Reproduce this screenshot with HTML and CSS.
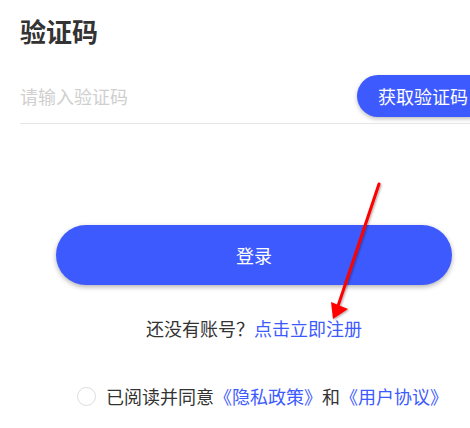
FILE: index.html
```html
<!DOCTYPE html>
<html lang="zh-CN">
<head>
    <meta charset="UTF-8">
    <meta name="viewport" content="width=device-width, initial-scale=1.0">
    <title>验证码登录</title>
    <link rel="stylesheet" href="styles.css">
</head>
<body>

    <div class="page">
        <!-- 标题 -->
        <h1 class="title">验证码</h1>

        <!-- 验证码输入 -->
        <div class="code-row">
            <input type="text" class="code-input" placeholder="请输入验证码">
            <button class="send-btn">获取验证码</button>
        </div>

        <!-- 登录 -->
        <button class="login-btn">登录</button>

        <p class="register">还没有账号？<a href="#">点击立即注册</a></p>

        <label class="agree">
            <span class="radio"></span>
            <span>已阅读并同意<a href="#">《隐私政策》</a>和<a href="#">《用户协议》</a></span>
        </label>
    </div>

    <!-- 标注箭头 -->
    <svg class="arrow" width="470" height="428" viewBox="0 0 470 428">
        <defs>
            <filter id="sh" x="-20%" y="-20%" width="140%" height="140%">
                <feDropShadow dx="1" dy="1" stdDeviation="1" flood-color="#000" flood-opacity="0.35"/>
            </filter>
        </defs>
        <g filter="url(#sh)">
            <line x1="379" y1="184" x2="336" y2="312" stroke="#f00" stroke-width="3" stroke-linecap="round"/>
            <polygon points="333,319 331,302 348,309" fill="#f00"/>
        </g>
    </svg>

</body>
</html>
```

FILE: styles.css
```css
html, body {
    margin: 0;
    padding: 0;
    background: #fff;
    overflow: hidden;
}

body {
    font-family: "Noto Sans CJK SC", "Noto Sans", sans-serif;
    color: #333;
    width: 470px;
    height: 428px;
    position: relative;
}

.page {
    padding: 13px 0 0 20px;
}

/* 标题 */
.title {
    margin: 0;
    font-size: 26px;
    line-height: 36px;
    font-weight: bold;
    color: #333;
}

/* 输入行 */
.code-row {
    display: flex;
    align-items: center;
    margin-top: 26px;
    padding-bottom: 6px;
    border-bottom: 1px solid #e6e6e6;
    width: 450px;
}

.code-input {
    flex: 1;
    min-width: 0;
    border: none;
    outline: none;
    padding: 0;
    font-family: inherit;
    font-size: 18px;
    color: #333;
    background: transparent;
}

.code-input::placeholder {
    color: #cfcfcf;
}

.send-btn {
    flex: none;
    height: 42px;
    width: 132px;
    padding: 0 0 0 21px;
    margin-right: -19px;
    text-align: left;
    border: none;
    border-radius: 21px;
    background-color: #3d5afe;
    color: #fff;
    font-family: inherit;
    font-size: 18px;
    white-space: nowrap;
    box-shadow: 0 2px 4px rgba(0, 0, 0, 0.25);
}

/* 登录按钮 */
.login-btn {
    display: block;
    margin: 101px 0 0 36px;
    width: 396px;
    height: 60px;
    border: none;
    border-radius: 30px;
    background-color: #3d5afe;
    color: #fff;
    font-family: inherit;
    font-size: 18px;
    box-shadow: 0 2px 5px rgba(0, 0, 0, 0.3);
}

.register {
    margin: 30px 0 0;
    padding-left: 126px;
    font-size: 18px;
    line-height: 26px;
}

a {
    color: #3d5afe;
    text-decoration: none;
}

/* 协议 */
.agree {
    display: flex;
    align-items: center;
    gap: 10px;
    margin: 42px 0 0 57px;
    font-size: 18px;
    line-height: 26px;
}

.radio {
    width: 17px;
    height: 17px;
    border: 1.5px solid #ddd;
    border-radius: 50%;
}

.arrow {
    position: absolute;
    left: 0;
    top: 0;
    pointer-events: none;
}
```
